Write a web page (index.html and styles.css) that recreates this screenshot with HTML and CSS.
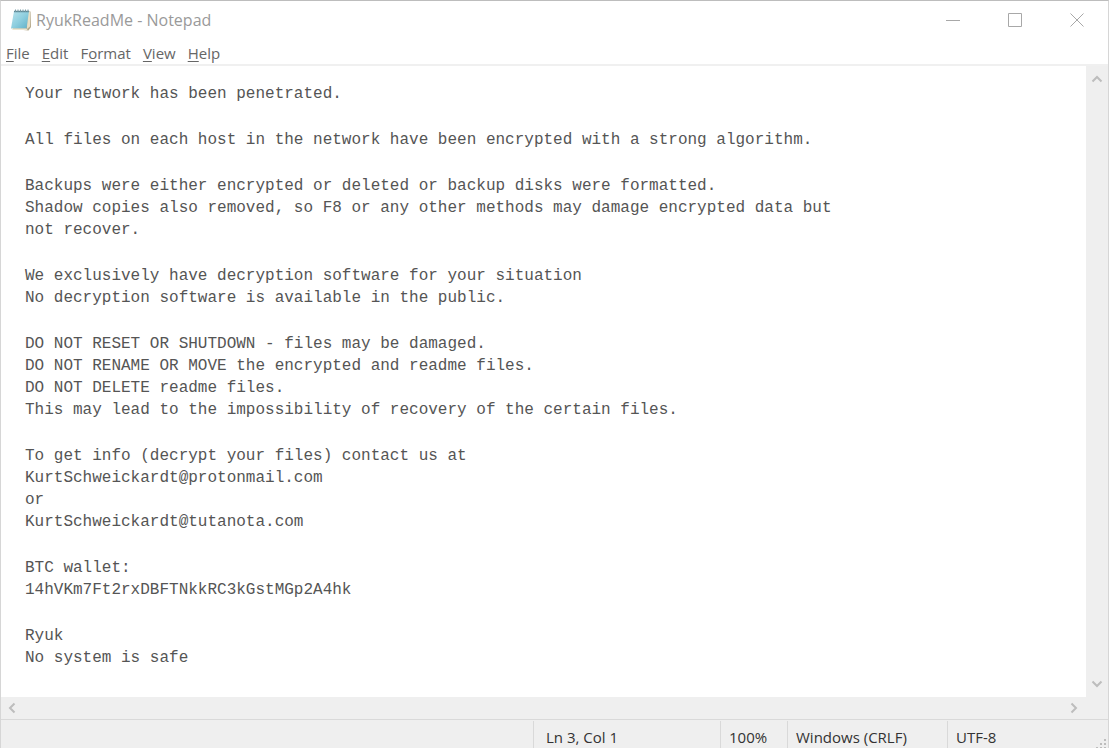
FILE: index.html
```
<!DOCTYPE html>
<html lang="en">
<head>
<meta charset="utf-8">
<title>RyukReadMe - Notepad</title>
<link rel="stylesheet" href="styles.css">
</head>
<body>
<div class="window">
  <header class="titlebar">
    <svg class="app-icon" viewBox="0 0 22 24" aria-hidden="true">
      <defs><linearGradient id="cover" x1="0" y1="0" x2="1" y2="1"><stop offset="0" stop-color="#b9e2ec"/><stop offset=".5" stop-color="#8fcfdf"/><stop offset="1" stop-color="#5fb0c8"/></linearGradient></defs>
      <path d="M5 3L20.500 3.500L21 19L18.500 22.500L3 21Z" fill="#b5a98a"/>
      <path d="M17.500 4L20 4L20 18.500L17 21Z" fill="#e8dfc5"/>
      <path d="M4 3L19 3L16.500 20.500L1 20.500Z" fill="url(#cover)"/>
      <path d="M1 20.500H16.500L17.500 22H3Z" fill="#ece6d2"/>
      <path d="M4 3.500H19" stroke="#5d8b99" stroke-width="1.500"/>
      <path d="M5.500 1.500V4M8 1.500V4M10.500 1.500V4M13 1.500V4M15.500 1.500V4M18 1.500V4" stroke="#769aa4"/>
    </svg>
    <h1 class="title">RyukReadMe - Notepad</h1>
    <div class="controls">
      <button class="control" aria-label="Minimize"><svg viewBox="0 0 16 16"><path d="M1 8.500H15"/></svg></button>
      <button class="control" aria-label="Maximize"><svg viewBox="0 0 16 16"><path d="M1.500 1.500H14.500V14.500H1.500Z"/></svg></button>
      <button class="control" aria-label="Close"><svg viewBox="0 0 16 16"><path d="M1.500 1.500L14.500 14.500M14.500 1.500L1.500 14.500"/></svg></button>
    </div>
  </header>
  <nav class="menubar" aria-label="Menu">
    <button class="menu"><u>F</u>ile</button>
    <button class="menu"><u>E</u>dit</button>
    <button class="menu">F<u>o</u>rmat</button>
    <button class="menu"><u>V</u>iew</button>
    <button class="menu"><u>H</u>elp</button>
  </nav>
  <div class="editor">
    <main class="document" role="textbox" aria-multiline="true" aria-label="Document text" contenteditable="true" spellcheck="false">
      <p>Your network has been penetrated.</p>
      <p>All files on each host in the network have been encrypted with a strong algorithm.</p>
      <p>Backups were either encrypted or deleted or backup disks were formatted.<br>Shadow copies also removed, so F8 or any other methods may damage encrypted data but<br>not recover.</p>
      <p>We exclusively have decryption software for your situation<br>No decryption software is available in the public.</p>
      <p>DO NOT RESET OR SHUTDOWN - files may be damaged.<br>DO NOT RENAME OR MOVE the encrypted and readme files.<br>DO NOT DELETE readme files.<br>This may lead to the impossibility of recovery of the certain files.</p>
      <p>To get info (decrypt your files) contact us at<br>KurtSchweickardt@protonmail.com<br>or<br>KurtSchweickardt@tutanota.com</p>
      <p>BTC wallet:<br>14hVKm7Ft2rxDBFTNkkRC3kGstMGp2A4hk</p>
      <p>Ryuk<br>No system is safe</p>
    </main>
    <div class="scroll scroll-y">
      <button class="arrow" aria-label="Scroll up"><svg viewBox="0 0 12 12"><path d="M1.500 8.500L6 4L10.500 8.500"/></svg></button>
      <button class="arrow" aria-label="Scroll down"><svg viewBox="0 0 12 12"><path d="M1.500 3.500L6 8L10.500 3.500"/></svg></button>
    </div>
  </div>
  <div class="scroll scroll-x">
    <button class="arrow" aria-label="Scroll left"><svg viewBox="0 0 12 12"><path d="M8.500 1.500L4 6L8.500 10.500"/></svg></button>
    <button class="arrow" aria-label="Scroll right"><svg viewBox="0 0 12 12"><path d="M3.500 1.500L8 6L3.500 10.500"/></svg></button>
  </div>
  <footer class="statusbar">
    <span class="status spacer"></span>
    <span class="status position">Ln 3, Col 1</span>
    <span class="status zoom">100%</span>
    <span class="status endings">Windows (CRLF)</span>
    <span class="status encoding">UTF-8</span>
    <svg class="grip" viewBox="0 0 12 12" aria-hidden="true"><path d="M8 1h2v2h-2zM4 5h2v2h-2zM8 5h2v2h-2zM0 9h2v2h-2zM4 9h2v2h-2zM8 9h2v2h-2z"/></svg>
  </footer>
</div>
</body>
</html>
```
FILE: styles.css
```
* { box-sizing: border-box; }
body { margin: 0; background: #fff; font-family: "Segoe UI", "Open Sans", "Noto Sans", sans-serif; }
button { margin: 0; padding: 0; border: 0; background: transparent; font: inherit; color: inherit; }
svg { display: block; }

.window {
  display: flex;
  flex-direction: column;
  min-height: 100vh;
  border: 1px solid #d6d6d6;
  border-top-color: #bdbdbd;
  border-bottom: 0;
}

.titlebar { display: flex; align-items: center; height: 38px; padding-left: 9px; gap: 4px; }
.app-icon { width: 22px; height: 24px; }
.title { margin: 0; font-size: 16px; line-height: 22px; font-weight: 400; color: #9a9a9a; }
.controls { display: flex; height: 100%; margin-left: auto; }
.control { display: grid; place-items: center; width: 62px; }
.control svg { width: 16px; height: 16px; fill: none; stroke: #a8a8a8; }

.menubar { display: flex; gap: 12px; height: 27px; padding: 3px 5px; border-bottom: 2px solid #f0f0f0; }
.menu { font-size: 15px; line-height: 22px; color: #666; }
.menu u { text-underline-offset: 2px; text-decoration-thickness: 1px; }

.editor { display: flex; flex: 1; }
.document {
  flex: 1;
  padding: 17px 24px;
  outline: 0;
  font-family: "Courier New", "Liberation Mono", monospace;
  font-size: 16px;
  line-height: 22px;
  color: #555;
}
.document p { margin: 0 0 24px; }
.document p:last-child { margin: 0; }

.scroll { display: flex; justify-content: space-between; background: #efefef; }
.scroll-y { flex-direction: column; width: 22px; padding: 7px 5px; }
.scroll-x { height: 22px; padding: 5px 28px 5px 5px; }
.arrow { width: 12px; height: 12px; }
.arrow svg { width: 12px; height: 12px; fill: none; stroke: #bdbdbd; stroke-width: 2; }

.statusbar { position: relative; display: flex; height: 29px; padding-top: 1px; border-top: 1px solid #d9d9d9; background: #efefef; }
.status { padding: 4px 8px; border-left: 1px solid #d9d9d9; font-size: 15px; line-height: 24px; color: #333; white-space: nowrap; }
.spacer { flex: 1; border-left: 0; }
.position { width: 187px; padding-left: 12px; }
.zoom { width: 67px; }
.endings { width: 160px; }
.encoding { width: 161px; }
.grip { position: absolute; right: 0; bottom: -2px; width: 12px; height: 12px; fill: #bdbdbd; }
```
